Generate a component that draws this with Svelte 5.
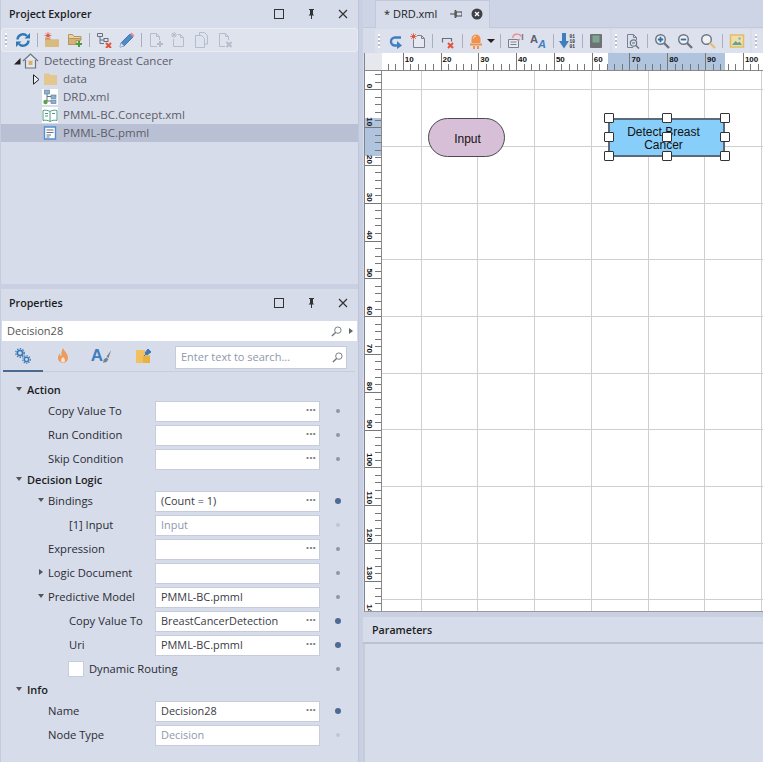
<script>
  const unit = 37.8;

  const sections = [
    { title: 'Action', rows: [
      { label: 'Copy Value To', more: true },
      { label: 'Run Condition', more: true },
      { label: 'Skip Condition', more: true }
    ]},
    { title: 'Decision Logic', rows: [
      { label: 'Bindings', value: '(Count = 1)', more: true, arrow: 'open', dot: 'set' },
      { label: '[1] Input', value: 'Input', depth: 1, muted: true, dot: 'faint' },
      { label: 'Expression', more: true },
      { label: 'Logic Document', arrow: 'closed' },
      { label: 'Predictive Model', value: 'PMML-BC.pmml', arrow: 'open' },
      { label: 'Copy Value To', value: 'BreastCancerDetection', depth: 1, more: true, dot: 'set' },
      { label: 'Uri', value: 'PMML-BC.pmml', depth: 1, more: true, dot: 'set' },
      { label: 'Dynamic Routing', check: true, depth: 1 }
    ]},
    { title: 'Info', rows: [
      { label: 'Name', value: 'Decision28', more: true, dot: 'set' },
      { label: 'Node Type', value: 'Decision', muted: true, dot: 'faint' }
    ]}
  ];

  // ruler marks, one label per 10 units
  const hMajors = Array.from({ length: 10 }, (_, i) => ({ n: (i + 1) * 10, x: 20.7 + i * unit }));
  const vMajors = Array.from({ length: 15 }, (_, i) => ({ n: i * 10, y: 18.3 + i * unit }));
  const minors = [1, 2, 3, 4].map((k) => k * unit / 5);

  const gridX = Array.from({ length: 7 }, (_, i) => Math.round(38.7 + i * 56.7) + 0.5);
  const gridY = Array.from({ length: 10 }, (_, i) => Math.round(18.1 + i * 56.7) + 0.5);

  const handles = [];
  for (const y of [0, 19, 38]) for (const x of [0, 58, 116]) handles.push({ x, y });
</script>

{#snippet paneButtons()}
  <div class="pane-buttons">
    <svg width="12" height="12" viewBox="0 0 12 12"><rect x="1.5" y="1.5" width="9" height="9" fill="none" stroke="#333" /></svg>
    <svg width="12" height="12" viewBox="0 0 12 12"><path d="M4 1h5v1H8v4l1 1.500H7V11H6V7.500H3.500L5 6V2H4z" fill="#333" /></svg>
    <svg width="12" height="12" viewBox="0 0 12 12"><path d="M2 2l8 8M10 2l-8 8" stroke="#333" stroke-width="1.200" /></svg>
  </div>
{/snippet}

{#snippet grip()}
  <span class="grip"></span>
{/snippet}

{#snippet glass(x, color)}
  <svg class="ic" viewBox="0 0 16 16"><circle cx="6.500" cy="6.500" r="4.800" fill="#eef1f6" stroke="#6d7480" stroke-width="1.400" /><path d="M10 10l5 5" stroke={color} stroke-width="2.400" />
    {#if x === 'plus'}<path d="M3.800 6.500h5.400M6.500 3.800v5.400" stroke="#2f6fb0" stroke-width="1.800" />{/if}
    {#if x === 'minus'}<path d="M3.800 6.500h5.400" stroke="#2f6fb0" stroke-width="1.800" />{/if}
  </svg>
{/snippet}

<div class="app">
  <div class="left">
    <section class="pane explorer">
      <header class="pane-head">
        <h2>Project Explorer</h2>
        {@render paneButtons()}
      </header>
      <div class="toolbar">
        {@render grip()}
        <svg class="ic" viewBox="0 0 16 16"><path d="M2.500 7.500A5.500 5.500 0 0 1 12 4" fill="none" stroke="#2f78b5" stroke-width="2.400" /><path d="M9.500 6.500H15V1z" fill="#2f78b5" /><path d="M13.500 8.500A5.500 5.500 0 0 1 4 12" fill="none" stroke="#2f78b5" stroke-width="2.400" /><path d="M6.500 9.500H1V15z" fill="#2f78b5" /></svg>
        <i class="sep"></i>
        <svg class="ic" viewBox="0 0 16 16"><path d="M1 6h5l1 1.500h8V15H1z" fill="#c9a86a" /><path d="M1 8h14v7H1z" fill="#d9bb7f" /><circle cx="4" cy="3.500" r="1.600" fill="#e2533a" /><path d="M4 0v7M.5 3.500h7M1.500 1l5 5M6.500 1l-5 5" stroke="#e2533a" stroke-width=".7" /></svg>
        <svg class="ic" viewBox="0 0 16 16"><path d="M1.500 12.500v-10h4l1.500 2h7V8" fill="#e7d4a8" stroke="#b8955a" /><path d="M1.500 12.500V6.500h12v2H9v4z" fill="#d3b476" stroke="#b8955a" /><path d="M12 9v6M9 12h6" stroke="#4f9a3c" stroke-width="2" /></svg>
        <i class="sep"></i>
        <svg class="ic" viewBox="0 0 16 16"><path d="M1.500 1.500h5v3h-5zM4 4.500v7h4M4 8h4" fill="none" stroke="#67707d" /><rect x="8" y="6.500" width="4" height="3" fill="none" stroke="#67707d" /><path d="M10 11l5 5M15 11l-5 5" stroke="#e2533a" stroke-width="2" /></svg>
        <svg class="ic" viewBox="0 0 16 16"><path d="M1 15l1-4L11 2l3 3-9 9z" fill="#4d8bc9" stroke="#2f69a6" stroke-width=".8" /><path d="M11 2l1.500-1.500 3 3L14 5z" fill="#e88a8f" /><path d="M1 15l1-4 3 3z" fill="#dfe4ee" /></svg>
        <i class="sep"></i>
        <svg class="ic off" viewBox="0 0 16 16"><path d="M9 14.500H2.500v-13h6l3 3V8M8.500 1.500v3h3" /><path d="M12 9v6M9 12h6" stroke-width="2" /></svg>
        <svg class="ic off" viewBox="0 0 16 16"><path d="M6.500 2.500h3l3 3v9h-10V7M9.500 2.500v3h3" /><path d="M3 0v6M0 3h6M1 1l4 4M5 1L1 5" /></svg>
        <svg class="ic off" viewBox="0 0 16 16"><path d="M5.500 3.500V.5h5l3 3v8.500h-3M1.500 3.500h6l3 3v9h-9z" /></svg>
        <svg class="ic off" viewBox="0 0 16 16"><path d="M8 14.500H2.500v-13h6l3 3V8M8.500 1.500v3h3" /><path d="M9.500 10l5 5M14.500 10l-5 5" stroke-width="2" /></svg>
      </div>
      <div class="tree">
        <div class="node">
          <span class="twist"><svg width="8" height="8" viewBox="0 0 8 8"><path d="M7.500 1v6.500H1z" fill="#222" /></svg></span>
          <svg class="tree-ic" viewBox="0 0 17 16"><path d="M1 8l7.500-7 7.500 7M3.500 7v8h10V7" fill="#e4e8f0" stroke="#6d7480" stroke-width="1.200" /><rect x="6.500" y="8" width="4" height="4" fill="#e0b060" /></svg>
          <span class="name">Detecting Breast Cancer</span>
        </div>
        <div class="node lv1">
          <span class="twist"><svg width="7" height="11" viewBox="0 0 7 11"><path d="M.5.800l5.500 4.700-5.500 4.700z" fill="#e8ecf4" stroke="#222" /></svg></span>
          <svg class="tree-ic" viewBox="0 0 17 16"><path d="M2 2.500h5L8.500 4H15v10H2z" fill="#e4c68f" /></svg>
          <span class="name">data</span>
        </div>
        <div class="node lv1">
          <span class="twist"></span>
          <svg class="tree-ic page" viewBox="0 0 16 16"><path d="M5 3v9h4M5 7.500h4" fill="none" stroke="#6d7480" /><rect x="2.500" y="1" width="5" height="4" fill="#7fb6df" stroke="#6d7480" stroke-width=".6" /><rect x="9" y="6" width="5" height="3.500" fill="#7fb6df" stroke="#6d7480" stroke-width=".6" /><rect x="9" y="11" width="5" height="3.500" fill="#7fb6df" stroke="#6d7480" stroke-width=".6" /><circle cx="3.500" cy="13" r="2.200" fill="#5aa34a" /></svg>
          <span class="name">DRD.xml</span>
        </div>
        <div class="node lv1">
          <span class="twist"></span>
          <svg class="tree-ic page" viewBox="0 0 16 16"><path d="M8 4.500C6 3 3 3 1 3.500v10c2-.5 5-.5 7 1 2-1.500 5-1.500 7-1v-10c-2-.5-5-.5-7 1zM8 4.500v10M3 6.500h3M10 6.500h3M3 9h3" fill="none" stroke="#4c9a83" /></svg>
          <span class="name">PMML-BC.Concept.xml</span>
        </div>
        <div class="node lv1 selected">
          <span class="twist"></span>
          <svg class="tree-ic page sel" viewBox="0 0 16 16"><path d="M2.500 2h11v12h-11z" fill="#fff" stroke="#4f8fd0" stroke-width="1.400" /><path d="M4.500 5h7M4.500 7.500h7M4.500 10h4.500M4.500 12h3" stroke="#67707d" /></svg>
          <span class="name">PMML-BC.pmml</span>
        </div>
      </div>
    </section>

    <section class="pane props">
      <header class="pane-head">
        <h2>Properties</h2>
        {@render paneButtons()}
      </header>
      <div class="object-bar">
        <span>Decision28</span>
        <svg class="mag" viewBox="0 0 12 12"><circle cx="7.500" cy="4.500" r="3.500" fill="none" stroke="#6d7480" /><path d="M5 7l-4 4" stroke="#6d7480" stroke-width="1.500" /></svg>
        <i class="more-arrow"></i>
      </div>
      <div class="tabs">
        <div class="tab active">
          <svg class="ic" viewBox="0 0 16 16"><circle cx="5" cy="5" r="2.700" fill="none" stroke="#3b7ab8" stroke-width="1.800" /><circle cx="5" cy="5" r="4.300" fill="none" stroke="#3b7ab8" stroke-width="1.200" stroke-dasharray="1.400 1.400" /><circle cx="11.500" cy="11.500" r="2.200" fill="none" stroke="#3b7ab8" stroke-width="1.500" /><circle cx="11.500" cy="11.500" r="3.800" fill="none" stroke="#3b7ab8" stroke-width="1.100" stroke-dasharray="1.300 1.200" /></svg>
        </div>
        <div class="tab">
          <svg class="ic" viewBox="0 0 16 16"><path d="M8 0c1 3 5 5 5 10a5 5 0 0 1-10 0c0-2 1-3.500 2-4.500 0 1.500.5 2.500 1.500 3C6 6 6.500 3 8 0z" fill="#ec9a5d" /><path d="M8 9c1 1 2 2 2 3.500a2 2 0 0 1-4 0C6 11 7 10 8 9z" fill="#f7e2cf" /></svg>
        </div>
        <div class="tab">
          <span class="az">A</span>
          <svg class="brush" viewBox="0 0 10 14"><path d="M9 0L4 7l2 2zM4 8l-3 2-1 4 4-1 2-3z" fill="#7a818e" /></svg>
        </div>
        <div class="tab">
          <svg class="ic" viewBox="0 0 16 16"><path d="M1 2h9v5h5v8H1z" fill="#f1c15f" /><path d="M8 8h7v7H8z" fill="#e9b044" /><path d="M10 5l3-4 3 3-4 3zM11 6l-2 2" fill="#3b78bd" stroke="#3b78bd" /></svg>
        </div>
        <div class="prop-search">
          <span>Enter text to search...</span>
          <svg class="mag" viewBox="0 0 12 12"><circle cx="7.500" cy="4.500" r="3.500" fill="none" stroke="#6d7480" /><path d="M5 7l-4 4" stroke="#6d7480" stroke-width="1.500" /></svg>
        </div>
      </div>
      <div class="grid">
        {#each sections as section}
          <div class="section-head"><i class="arrow open"></i>{section.title}</div>
          {#each section.rows as row}
            <div class="row">
              {#if row.check}
                <div class="check-cell"><span class="check"></span><span>{row.label}</span></div>
              {:else}
                <div class="label" class:sub={row.depth}>
                  {#if row.arrow}<i class="arrow {row.arrow}"></i>{/if}
                  {row.label}
                </div>
                <div class="field" class:muted={row.muted}>
                  <span>{row.value ?? ''}</span>
                  {#if row.more}<b class="dots">···</b>{/if}
                </div>
              {/if}
              <span class="dot {row.dot ?? ''}"></span>
            </div>
          {/each}
        {/each}
      </div>
    </section>
  </div>

  <div class="right">
    <div class="tabstrip">
      <div class="doc-tab">
        <span>* DRD.xml</span>
        <svg width="12" height="10" viewBox="0 0 12 10"><path d="M0 5h5M5 1.500h1v7H5zM6 3h6v4H6z" fill="none" stroke="#444" stroke-width="1" /></svg>
        <svg width="12" height="12" viewBox="0 0 12 12"><circle cx="6" cy="6" r="5.500" fill="#3f4147" /><path d="M4 4l4 4M8 4l-4 4" stroke="#fff" stroke-width="1.300" /></svg>
      </div>
    </div>
    <div class="doc">
      <div class="doc-tools">
        <div class="band first">
          {@render grip()}
          <svg class="ic" viewBox="0 0 16 16"><path d="M13 4.500H7a4 4 0 0 0 0 8h4" fill="none" stroke="#3f7fc0" stroke-width="2.400" /><path d="M9 8l5 4.500-5 3.500z" fill="#3f7fc0" /></svg>
          <svg class="ic" viewBox="0 0 16 16"><path d="M7 2.500h4.500l3 3v9h-11V7M11.500 2.500v3h3" fill="#e6e9f1" stroke="#7a818e" /><circle cx="3.500" cy="3.500" r="1.800" fill="#e2533a" /><path d="M3.500 0v7M0 3.500h7M1 1l5 5M6 1L1 6" stroke="#e2533a" stroke-width=".7" /></svg>
          <i class="sep"></i>
          <svg class="ic shifted" viewBox="0 0 16 16"><path d="M2.500 9.500v-4h9v3" fill="none" stroke="#67707d" stroke-width="1.200" /><path d="M8 10l5 5M13 10l-5 5" stroke="#e2533a" stroke-width="2" /></svg>
          <i class="sep"></i>
          <svg class="ic" viewBox="0 0 16 16"><path d="M3.500 10V6a4.500 4.500 0 0 1 9 0v4z" fill="#f0934a" /><path d="M2 10.500h12v2H2zM5 13h2v3H5zM9 13h2v3H9z" fill="#f0934a" /><path d="M5.500 5.500a2.500 2.500 0 0 1 2.500-2.500" stroke="#fbd9bf" fill="none" /></svg>
          <i class="caret"></i>
          <i class="sep"></i>
          <svg class="ic wide" viewBox="0 0 17 16"><path d="M1.500 6.500h10v8h-10zM3.500 9h6M3.500 11.500h6" fill="#e6e9f1" stroke="#7a818e" /><path d="M6 5a4 3 0 0 1 8-1.500M10 7a3 3 0 0 0 3-1" fill="none" stroke="#e8908a" stroke-width="1.400" /><path d="M15.500 1v6" stroke="#7a818e" stroke-width="1.500" /></svg>
          <svg class="ic wide" viewBox="0 0 17 16"><text x="0" y="10" class="az-a">A</text><text x="8" y="15" class="az-b">A</text></svg>
          <i class="sep"></i>
          <svg class="ic wide" viewBox="0 0 17 16"><path d="M3 0h4v8h3l-5 7.500L0 8h3z" fill="#3f7fc0" /><text x="10.500" y="5" class="bin">01</text><text x="10.500" y="10" class="bin">10</text><text x="10.500" y="15" class="bin">01</text></svg>
          <i class="sep"></i>
          <svg class="ic" viewBox="0 0 16 16"><rect x="2" y="1" width="12" height="14" rx="1" fill="#6d7275" /><rect x="4.500" y="2.500" width="7" height="7" fill="#7da592" /></svg>
        </div>
        <div class="band second">
          {@render grip()}
          <svg class="ic" viewBox="0 0 16 16"><path d="M8 14.500H2.500v-13h6l3 3V7M8.500 1.500v3h3" fill="none" stroke="#7a818e" /><circle cx="8.500" cy="10" r="3.200" fill="none" stroke="#6d7480" stroke-width="1.200" /><path d="M7 10h3" stroke="#2f6fb0" /><path d="M11 12.500l3 3" stroke="#6d7480" stroke-width="1.600" /></svg>
          <i class="sep"></i>
          {@render glass('plus', '#6d7480')}
          {@render glass('minus', '#6d7480')}
          {@render glass('', '#e6c070')}
          <i class="sep"></i>
          <svg class="ic" viewBox="0 0 16 16"><rect x="1.500" y="2" width="13" height="12" fill="#f3dda6" stroke="#e3bc6a" stroke-width="1.500" /><path d="M3 12l3.500-4 2.500 2 1.500-1.500 2.500 3.500z" fill="#5aa88f" /><circle cx="10.500" cy="5.500" r="1.200" fill="#6fb7d9" /></svg>
        </div>
        <div class="band third">{@render grip()}</div>
      </div>

      <div class="designer">
        <div class="ruler-top">
          <div class="corner"></div>
          <svg class="hruler" width="381" height="17">
            <rect x="226" y="0" width="117" height="17" fill="#b0c4de" />
            {#each hMajors as m}
              <path d="M{Math.round(m.x) + .5} 0V17" stroke="#777" />
              <text x={m.x + 2} y="8.500" class="rule-text">{m.n}</text>
            {/each}
            {#each [-1, ...hMajors.map((_, i) => i)] as i}
              {#each minors as d}
                <path d="M{Math.round(20.7 + i * unit + d) + .5} 11V17" stroke="#777" />
              {/each}
            {/each}
          </svg>
        </div>
        <div class="ruler-body">
          <svg class="vruler" width="17" height="540">
            <rect x="0" y="47" width="17" height="38" fill="#b0c4de" />
            {#each vMajors as m}
              <path d="M0 {Math.round(m.y) + .5}H17" stroke="#777" />
              <text transform="translate(2 {m.y - 1}) rotate(90)" text-anchor="end" class="rule-text">{m.n}</text>
              {#each minors as d}
                <path d="M10 {Math.round(m.y + d) + .5}H17" stroke="#777" />
                <path d="M10 {Math.round(m.y - unit + d) + .5}H17" stroke="#777" />
              {/each}
            {/each}
          </svg>
          <div class="canvas">
            <svg class="lines" width="381" height="540">
              {#each gridX as x}<path d="M{x} 0V540" stroke="#cfcfcf" />{/each}
              {#each gridY as y}<path d="M0 {y}H381" stroke="#cfcfcf" />{/each}
            </svg>
            <div class="node-input">Input</div>
            <div class="node-decision">
              <span>Detect Breast<br />Cancer</span>
              {#each handles as h}
                <i class="handle" style="left: {h.x}px; top: {h.y}px"></i>
              {/each}
            </div>
          </div>
        </div>
      </div>
    </div>
    <section class="params">
      <header class="params-head">Parameters</header>
      <div class="params-body"></div>
    </section>
  </div>
</div>

<style>
  :global(body) { margin: 0; background: #cdd4e5; }
  .app {
    display: flex;
    width: 763px;
    height: 762px;
    overflow: hidden;
    font-family: "Open Sans", "Noto Sans", sans-serif;
    font-size: 11px;
    color: #2b2b33;
    background: #c9d0e2;
  }
  svg { display: block; flex: none; }

  .left { width: 358px; display: flex; flex-direction: column; gap: 5px; border-right: 1px solid #bcc5da; }
  .pane { background: #d6dcea; display: flex; flex-direction: column; box-sizing: border-box; }
  .explorer { height: 284px; border-left: 1px solid #c5ccdd; }
  .props { flex: 1; border-left: 1px solid #c5ccdd; }

  .pane-head { height: 28px; flex: none; display: flex; align-items: center; justify-content: space-between; padding: 0 9px 0 8px; box-sizing: border-box; }
  h2 { margin: 0 0 1px; font-size: 10.700px; font-weight: 600; color: #1c1c22; }
  .pane-buttons { display: flex; gap: 20px; }

  .toolbar {
    height: 24px;
    flex: none;
    display: flex;
    align-items: center;
    gap: 7px;
    padding-left: 3px;
    box-sizing: border-box;
    background: #dfe3ee;
    border: 1px solid #e9ecf3;
    border-radius: 3px;
  }
  .grip { width: 2px; height: 14px; margin-right: 1px; flex: none; background: repeating-linear-gradient(#fff 0 2px, transparent 2px 4px), #b7bdcb; background-size: 2px 4px; }
  .ic { width: 16px; height: 16px; }
  .ic.wide { width: 17px; }
  .ic.off { fill: none; stroke: #b5bccb; }
  .ic.shifted { margin-left: 2px; }
  .sep { width: 1px; height: 14px; margin: 0 -1px; background: #a9afbd; flex: none; }

  .tree { flex: 1; color: #5d5d68; font-size: 11.500px; }
  .node { height: 18px; display: flex; align-items: center; padding-left: 12px; }
  .node.lv1 { padding-left: 32px; }
  .node.selected { background: #b9c0d4; }
  .name { margin: 0 0 2px 5px; white-space: nowrap; }
  .lv1 .name { margin-left: 4px; }
  .twist { width: 9px; height: 18px; flex: none; display: flex; align-items: center; }
  .tree-ic { width: 17px; height: 16px; }
  .tree-ic.page { background: #fff; width: 16px; margin-right: 1px; }
  .tree-ic.page.sel { background: none; }

  .object-bar { height: 20px; margin: 4px 1px 0 1px; background: #fff; display: flex; align-items: center; padding: 0 4px 0 5px; color: #555; font-size: 11px; flex: none; }
  .object-bar span { flex: 1; margin-bottom: 2px; }
  .mag { width: 11px; height: 11px; }
  .more-arrow { width: 0; height: 0; margin-left: 7px; border: 3px solid transparent; border-left: 4px solid #666; border-right: 0; }

  .tabs { height: 30px; margin: 0 3px 0 2px; border-bottom: 1px solid #c6cddd; display: flex; align-items: stretch; flex: none; position: relative; }
  .tab { width: 40px; display: flex; align-items: center; justify-content: center; box-sizing: border-box; position: relative; }
  .tab.active { border-bottom: 2px solid #4b6a90; margin-bottom: -1px; }
  .az { font: 700 17px "Liberation Sans", sans-serif; color: #3f7fc0; margin-left: -3px; }
  .brush { width: 9px; height: 13px; }
  .prop-search { margin: 5px 8px 2px auto; width: 172px; background: #fff; border: 1px solid #c4cbdb; box-sizing: border-box; display: flex; align-items: center; justify-content: space-between; padding: 0 3px 0 5px; color: #8f98ad; font-size: 11px; }
  .prop-search span { margin-bottom: 2px; }

  .grid { padding-top: 9px; }
  .section-head { height: 18px; display: flex; align-items: center; font-weight: 600; font-size: 11px; color: #1c1c22; padding: 0 0 2px 15px; box-sizing: border-box; }
  .arrow { display: inline-block; width: 0; height: 0; flex: none; }
  .arrow.open { border: 3px solid transparent; border-top: 4px solid #555; border-bottom: 0; margin-right: 4px; margin-left: -10px; }
  .arrow.closed { border: 3px solid transparent; border-left: 4px solid #555; border-right: 0; margin-right: 5px; margin-left: -9px; }
  .section-head .arrow.open { margin: 0 5px 0 0; }

  .row { height: 24px; display: flex; align-items: center; }
  .label { width: 154px; height: 21px; flex: none; padding: 0 0 2px 47px; box-sizing: border-box; display: flex; align-items: center; white-space: nowrap; font-size: 11.200px; }
  .label.sub { padding-left: 68px; }
  .field { width: 165px; height: 21px; flex: none; background: #fff; border: 1px solid #c6ccda; box-sizing: border-box; display: flex; align-items: center; justify-content: space-between; padding: 0 3px 2px 5px; color: #3a3a44; font-size: 10.900px; white-space: nowrap; }
  .field.muted { color: #8f98ad; }
  .dots { color: #777; font-size: 12px; line-height: 1; }
  .check-cell { width: 319px; padding-left: 67px; box-sizing: border-box; display: flex; align-items: center; gap: 5px; font-size: 11.200px; flex: none; }
  .check-cell span:last-child { margin-bottom: 2px; }
  .check { width: 16px; height: 16px; background: #fff; border: 1px solid #c6ccda; box-sizing: border-box; flex: none; }
  .dot { width: 4px; height: 4px; margin-left: 16px; border-radius: 50%; background: #8d96aa; flex: none; }
  .dot.set { width: 6px; height: 6px; margin-left: 15px; background: #4d6a92; }
  .dot.faint { background: #bfc6d6; }

  .right { flex: 1; min-width: 0; margin-left: 4px; display: flex; flex-direction: column; }
  .tabstrip { height: 27px; flex: none; display: flex; padding-left: 12px; background: #cdd4e5; }
  .doc-tab { width: 115px; height: 28px; box-sizing: border-box; background: #d6dcea; border: 1px solid #c1c9da; border-bottom: 0; display: flex; align-items: center; padding: 0 0 2px 8px; font-size: 11px; color: #222; position: relative; }
  .doc-tab svg:nth-child(2) { margin-left: 13px; }
  .doc-tab svg:nth-child(3) { margin-left: 9px; }
  .doc { height: 585px; flex: none; background: #d6dcea; border-top: 1px solid #c1c9da; padding-left: 1px; box-sizing: border-box; display: flex; flex-direction: column; }
  .doc-tools { height: 25px; flex: none; display: flex; align-items: center; padding-left: 11px; gap: 2px; }
  .band { height: 24px; display: flex; align-items: center; gap: 7px; background: #dde1ed; border-radius: 3px; padding-left: 3px; box-sizing: border-box; }
  .first { width: 235px; gap: 6.500px; }
  .second { width: 138px; }
  .third { flex: 1; }
  .caret { width: 0; height: 0; border: 4px solid transparent; border-top: 4px solid #222; border-bottom: 0; margin-left: -4px; flex: none; }
  .az-a { font: 700 11px "Liberation Sans", sans-serif; fill: #5a6270; }
  .az-b { font: italic 700 11px "Liberation Sans", sans-serif; fill: #3f7fc0; }
  .bin { font: 700 4.500px "Liberation Mono", monospace; fill: #333; }

  .designer { flex: 1; border-left: 1px solid #7f8590; border-bottom: 1px solid #999; display: flex; flex-direction: column; min-height: 0; }
  .ruler-top { height: 17px; flex: none; display: flex; background: #fff; }
  .corner { width: 17px; height: 17px; background: #e6e8ee; flex: none; }
  .ruler-body { flex: 1; display: flex; min-height: 0; border-top: 1px solid #888; }
  .vruler { background: #fff; border-right: 1px solid #888; box-sizing: border-box; flex: none; }
  .rule-text { font: 700 8px "Liberation Sans", sans-serif; fill: #111; }
  .canvas { flex: 1; position: relative; background: #fff; overflow: hidden; }
  .lines { position: absolute; left: 0; top: 0; }

  .node-input, .node-decision { position: absolute; display: flex; align-items: center; justify-content: center; box-sizing: border-box; text-align: center; font: 12px/13px "Liberation Sans", sans-serif; color: #111; top: 47px; height: 39px; }
  .node-input { left: 46px; width: 77px; background: #d8bfd8; border: 1.500px solid #4a4a50; border-radius: 20px; padding: 3px 0 0 2px; }
  .node-decision { left: 226px; width: 117px; background: #87cefa; border: 2px solid #5a6a78; padding: 2px 6px 0 0; }
  .handle { position: absolute; width: 10px; height: 10px; margin: -7px 0 0 -6px; background: #fff; border: 1px solid #333; border-radius: 1px; box-sizing: border-box; }

  .params { flex: 1; margin-top: 5px; background: #d6dcea; display: flex; flex-direction: column; }
  .params-head { height: 27px; flex: none; box-sizing: border-box; display: flex; align-items: center; padding: 0 0 0 9px; font-weight: 600; font-size: 10.700px; color: #1c1c22; border-bottom: 2px solid #b9c4d0; }
  .params-body { flex: 1; border-left: 2px solid #c5ccdd; }
</style>
